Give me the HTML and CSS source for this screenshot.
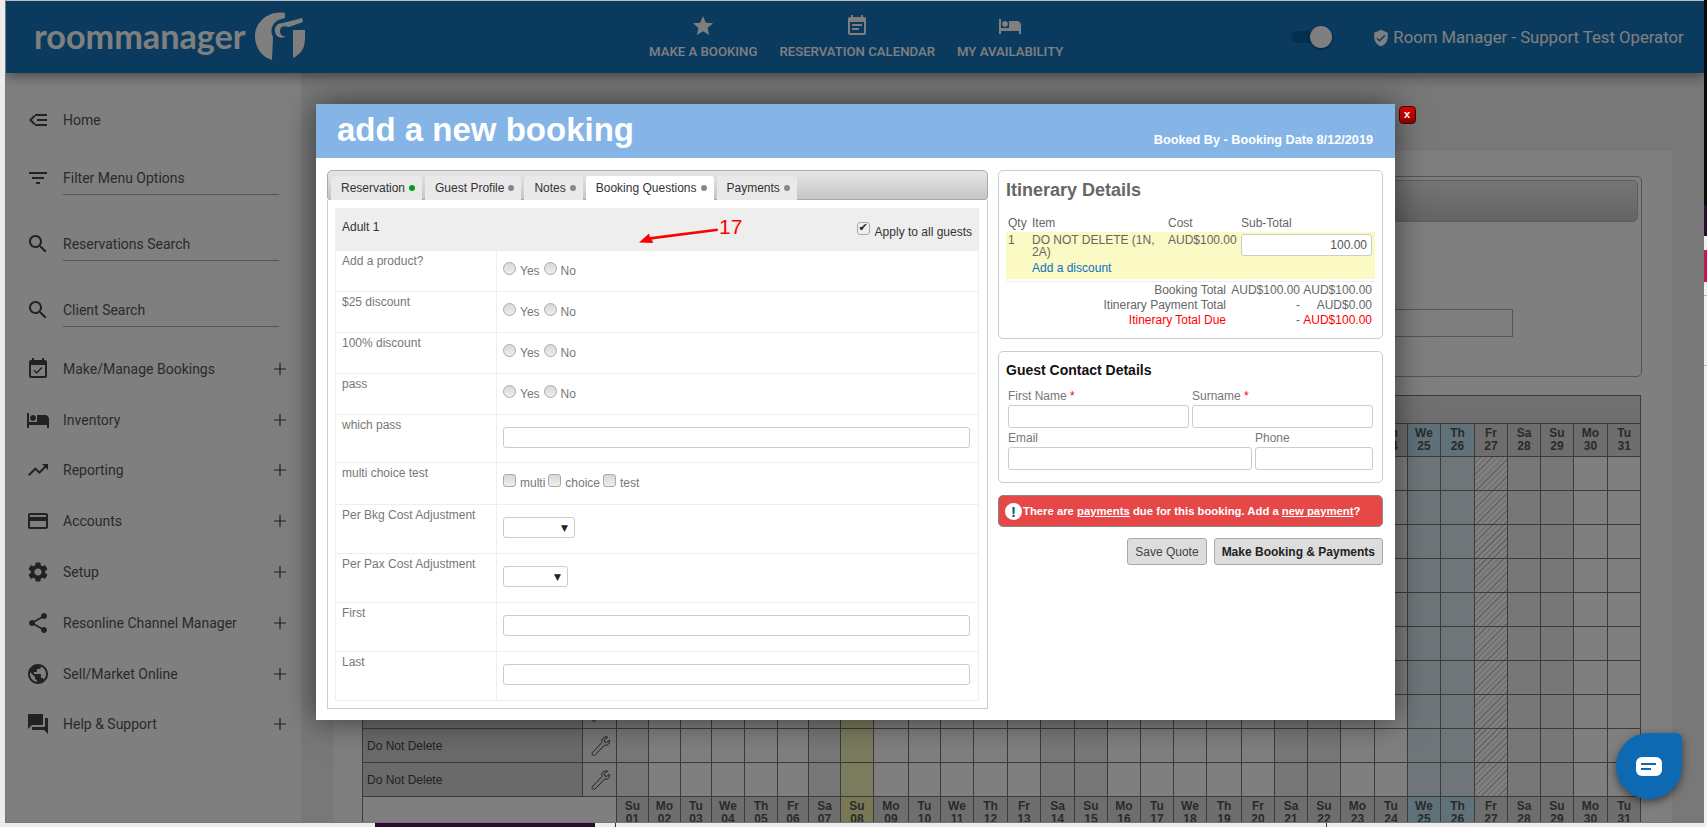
FILE: index.html
```html
<!DOCTYPE html>
<html lang="en">
<head>
<meta charset="utf-8">
<title>Room Manager - add a new booking</title>
<link rel="stylesheet" href="styles.css">
</head>
<body>
<svg class="defs" aria-hidden="true">
  <symbol id="wrench" viewBox="0 0 24 24"><path d="M20.500 2.500c-2-1-4.600-.4-5.800 1.400-.9 1.300-1 2.900-.5 4.200L4 18.800c-.9 1-.9 2.300 0 3s2 .6 2.900-.3L17.200 11c1.500.4 3.100.1 4.200-1.200 1-1.200 1.300-2.800.7-4.200l-2.700 2.500-2.400-.7-.5-2.300z" fill="#e8e8e8" stroke="#333" stroke-width="1"/></symbol>
</svg>

<div class="behind-strip">
  <div class="strip-black"></div>
  <div class="strip-purple"></div>
  <div class="strip-pink"></div>
  <div class="strip-line"></div>
  <div class="strip-line strip-line-b"></div>
</div>
<div class="behind-bar"></div>
<div class="behind-tick"></div>
<div class="behind-tick behind-tick-b"></div>

<div class="window">
  <header class="topbar">
    <div class="logo">
      <span class="logo-text">roommanager</span>
      <svg class="logo-mark" viewBox="0 0 50 48">
        <path d="M30 1C14-2 0 10 0 24c0 12 7 21 17 24l1-23c-4-7 0-17 9-18l3-1z" fill="#fff"/>
        <path d="M50 18v8c0 10-4 16-12 20V18z" fill="#fff"/>
        <path d="M28 11l19-5 1 4-14 5c-6-2-9 0-9 4s3 6 6 5c-3 3-10 2-11-4s3-9 8-9z" fill="#fff"/>
      </svg>
    </div>
    <nav class="topnav">
      <a class="topnav-item"><svg class="topnav-icon" viewBox="0 0 24 24"><path d="M12 17.270L18.180 21l-1.640-7.030L22 9.240l-7.190-.61L12 2 9.190 8.630 2 9.240l5.460 4.730L5.820 21z"/></svg>MAKE A BOOKING</a>
      <a class="topnav-item"><svg class="topnav-icon" viewBox="0 0 24 24"><path d="M17 10H7v2h10v-2zm2-7h-1V1h-2v2H8V1H6v2H5c-1.110 0-1.990.9-1.990 2L3 19c0 1.100.89 2 2 2h14c1.100 0 2-.9 2-2V5c0-1.100-.9-2-2-2zm0 16H5V8h14v11zm-5-5H7v2h7v-2z"/></svg>RESERVATION CALENDAR</a>
      <a class="topnav-item"><svg class="topnav-icon" viewBox="0 0 24 24"><path d="M7 13c1.660 0 3-1.340 3-3S8.660 7 7 7s-3 1.340-3 3 1.340 3 3 3zm12-6h-8v7H3V5H1v15h2v-3h18v3h2v-9c0-2.210-1.790-4-4-4z"/></svg>MY AVAILABILITY</a>
    </nav>
    <div class="toggle"><span class="toggle-track"></span><span class="toggle-knob"></span></div>
    <div class="operator">
      <svg class="operator-icon" viewBox="0 0 24 24"><path d="M12 1L3 5v6c0 5.550 3.840 10.740 9 12 5.160-1.260 9-6.450 9-12V5l-9-4zm-2 16l-4-4 1.410-1.410L10 14.170l6.590-6.590L18 9l-8 8z"/></svg>
      <span>Room Manager - Support Test Operator</span>
    </div>
  </header>

  <div class="workspace">
    <aside class="sidebar">
      <a class="side-home"><svg class="side-icon" viewBox="0 0 24 24"><path d="M9 18h12v-2H9v2zm2-5h10v-2H11v2zM9 6v2h12V6H9zM3 12l5 5 1.410-1.410L5.830 12l3.580-3.590L8 7l-5 5z"/></svg><span>Home</span></a>
      <a class="side-search"><svg class="side-icon" viewBox="0 0 24 24"><path d="M10 18h4v-2h-4v2zM3 6v2h18V6H3zm3 7h12v-2H6v2z"/></svg><span class="side-lined">Filter Menu Options</span></a>
      <a class="side-search"><svg class="side-icon" viewBox="0 0 24 24"><path d="M15.500 14h-.79l-.28-.27C15.410 12.590 16 11.110 16 9.500 16 5.910 13.090 3 9.500 3S3 5.910 3 9.500 5.910 16 9.500 16c1.610 0 3.090-.59 4.230-1.570l.27.28v.79l5 4.990L20.490 19l-4.990-5zm-6 0C7.010 14 5 11.990 5 9.500S7.010 5 9.500 5 14 7.010 14 9.500 11.990 14 9.500 14z"/></svg><span class="side-lined">Reservations Search</span></a>
      <a class="side-search"><svg class="side-icon" viewBox="0 0 24 24"><path d="M15.500 14h-.79l-.28-.27C15.410 12.590 16 11.110 16 9.500 16 5.910 13.090 3 9.500 3S3 5.910 3 9.500 5.910 16 9.500 16c1.610 0 3.090-.59 4.230-1.570l.27.28v.79l5 4.990L20.490 19l-4.990-5zm-6 0C7.010 14 5 11.990 5 9.500S7.010 5 9.500 5 14 7.010 14 9.500 11.990 14 9.500 14z"/></svg><span class="side-lined">Client Search</span></a>
      <ul class="side-list">
        <li class="side-row"><svg class="side-icon" viewBox="0 0 24 24"><path d="M16.530 11.060L15.470 10l-4.880 4.880-2.120-2.120-1.060 1.060L10.590 17l5.940-5.940zM19 3h-1V1h-2v2H8V1H6v2H5c-1.110 0-1.990.9-1.990 2L3 19c0 1.100.89 2 2 2h14c1.100 0 2-.9 2-2V5c0-1.100-.9-2-2-2zm0 16H5V8h14v11z"/></svg><span class="side-label">Make/Manage Bookings</span><svg class="side-plus" viewBox="0 0 12 12"><path d="M6 0v12M0 6h12"/></svg></li>
        <li class="side-row"><svg class="side-icon" viewBox="0 0 24 24"><path d="M7 13c1.660 0 3-1.340 3-3S8.660 7 7 7s-3 1.340-3 3 1.340 3 3 3zm12-6h-8v7H3V5H1v15h2v-3h18v3h2v-9c0-2.210-1.790-4-4-4z"/></svg><span class="side-label">Inventory</span><svg class="side-plus" viewBox="0 0 12 12"><path d="M6 0v12M0 6h12"/></svg></li>
        <li class="side-row"><svg class="side-icon" viewBox="0 0 24 24"><path d="M16 6l2.290 2.290-4.880 4.880-4-4L2 16.590 3.410 18l6-6 4 4 6.300-6.290L22 12V6z"/></svg><span class="side-label">Reporting</span><svg class="side-plus" viewBox="0 0 12 12"><path d="M6 0v12M0 6h12"/></svg></li>
        <li class="side-row"><svg class="side-icon" viewBox="0 0 24 24"><path d="M20 4H4c-1.110 0-1.990.89-1.990 2L2 18c0 1.110.89 2 2 2h16c1.110 0 2-.89 2-2V6c0-1.110-.89-2-2-2zm0 14H4v-6h16v6zm0-10H4V6h16v2z"/></svg><span class="side-label">Accounts</span><svg class="side-plus" viewBox="0 0 12 12"><path d="M6 0v12M0 6h12"/></svg></li>
        <li class="side-row"><svg class="side-icon" viewBox="0 0 24 24"><path d="M19.140 12.940c.04-.3.06-.61.06-.94 0-.32-.02-.64-.07-.94l2.030-1.580c.18-.14.23-.41.12-.61l-1.920-3.320c-.12-.22-.37-.29-.59-.22l-2.390.96c-.5-.38-1.030-.7-1.620-.94l-.36-2.540c-.04-.24-.24-.41-.48-.41h-3.840c-.24 0-.43.17-.47.41l-.36 2.540c-.59.24-1.130.57-1.620.94l-2.390-.96c-.22-.08-.47 0-.59.22L2.740 8.870c-.12.21-.08.47.12.61l2.030 1.580c-.05.3-.09.63-.09.94s.02.64.07.94l-2.030 1.580c-.18.14-.23.41-.12.61l1.920 3.320c.12.22.37.29.59.22l2.390-.96c.5.38 1.030.7 1.620.94l.36 2.540c.05.24.24.41.48.41h3.840c.24 0 .44-.17.47-.41l.36-2.540c.59-.24 1.130-.56 1.620-.94l2.390.96c.22.08.47 0 .59-.22l1.920-3.320c.12-.22.07-.47-.12-.61l-2.010-1.580zM12 15.600c-1.980 0-3.600-1.620-3.600-3.600s1.620-3.600 3.600-3.600 3.600 1.620 3.600 3.600-1.620 3.600-3.600 3.600z"/></svg><span class="side-label">Setup</span><svg class="side-plus" viewBox="0 0 12 12"><path d="M6 0v12M0 6h12"/></svg></li>
        <li class="side-row"><svg class="side-icon" viewBox="0 0 24 24"><path d="M18 16.080c-.76 0-1.440.3-1.960.77L8.910 12.700c.05-.23.09-.46.09-.7s-.04-.47-.09-.7l7.050-4.110c.54.5 1.250.81 2.040.81 1.660 0 3-1.340 3-3s-1.340-3-3-3-3 1.340-3 3c0 .24.04.47.09.7L8.040 9.810C7.500 9.310 6.790 9 6 9c-1.660 0-3 1.340-3 3s1.340 3 3 3c.79 0 1.500-.31 2.040-.81l7.120 4.160c-.05.21-.08.43-.08.65 0 1.610 1.310 2.920 2.920 2.920 1.610 0 2.920-1.310 2.920-2.920s-1.310-2.920-2.920-2.920z"/></svg><span class="side-label">Resonline Channel Manager</span><svg class="side-plus" viewBox="0 0 12 12"><path d="M6 0v12M0 6h12"/></svg></li>
        <li class="side-row"><svg class="side-icon" viewBox="0 0 24 24"><path d="M12 2C6.480 2 2 6.480 2 12s4.480 10 10 10 10-4.480 10-10S17.520 2 12 2zm-1 17.930c-3.950-.49-7-3.850-7-7.930 0-.62.08-1.210.21-1.790L9 15v1c0 1.100.9 2 2 2v1.930zm6.900-2.540c-.26-.81-1-1.390-1.900-1.390h-1v-3c0-.55-.45-1-1-1H8v-2h2c.55 0 1-.45 1-1V7h2c1.100 0 2-.9 2-2v-.41c2.930 1.190 5 4.060 5 7.410 0 2.080-.8 3.970-2.100 5.390z"/></svg><span class="side-label">Sell/Market Online</span><svg class="side-plus" viewBox="0 0 12 12"><path d="M6 0v12M0 6h12"/></svg></li>
        <li class="side-row"><svg class="side-icon" viewBox="0 0 24 24"><path d="M21 6h-2v9H6v2c0 .55.45 1 1 1h11l4 4V7c0-.55-.45-1-1-1zm-4 6V3c0-.55-.45-1-1-1H3c-.55 0-1 .45-1 1v14l4-4h10c.55 0 1-.45 1-1z"/></svg><span class="side-label">Help &amp; Support</span><svg class="side-plus" viewBox="0 0 12 12"><path d="M6 0v12M0 6h12"/></svg></li>
      </ul>
    </aside>

    <main class="main">
      <section class="panel">
        <div class="search-box">
          <div class="search-bar"></div>
          <div class="search-field"><div class="search-input"></div></div>
        </div>
        <table class="cal">
          <colgroup>
            <col class="c-name"><col class="c-tool">
            <col class="w32 wk"><col class="w32"><col class="w31"><col class="w33"><col class="w33"><col class="w31"><col class="w32 wk">
            <col class="w33 today"><col class="w35"><col class="w32"><col class="w33"><col class="w34"><col class="w33"><col class="w34 wk">
            <col class="w33 wk"><col class="w33"><col class="w33"><col class="w33"><col class="w35"><col class="w33"><col class="w33 wk">
            <col class="w33 wk"><col class="w34"><col class="w33"><col class="w33 hl"><col class="w34 hl"><col class="w33 hatch"><col class="w33 wk">
            <col class="w33 wk"><col class="w34"><col class="w33">
          </colgroup>
          <tr class="cal-title"><td colspan="33"></td></tr>
          <tr class="cal-days">
            <th colspan="2" class="blank"></th>
            <th>Su<br>01</th><th>Mo<br>02</th><th>Tu<br>03</th><th>We<br>04</th><th>Th<br>05</th><th>Fr<br>06</th><th>Sa<br>07</th><th class="today">Su<br>08</th><th>Mo<br>09</th><th>Tu<br>10</th><th>We<br>11</th><th>Th<br>12</th><th>Fr<br>13</th><th>Sa<br>14</th><th>Su<br>15</th><th>Mo<br>16</th><th>Tu<br>17</th><th>We<br>18</th><th>Th<br>19</th><th>Fr<br>20</th><th>Sa<br>21</th><th>Su<br>22</th><th>Mo<br>23</th><th>Tu<br>24</th><th class="hl">We<br>25</th><th class="hl">Th<br>26</th><th>Fr<br>27</th><th>Sa<br>28</th><th>Su<br>29</th><th>Mo<br>30</th><th>Tu<br>31</th>
          </tr>
          <tr class="cal-row"><td class="r-name">Do Not Delete</td><td class="r-tool"><svg class="wrench"><use href="#wrench"/></svg></td><td></td><td></td><td></td><td></td><td></td><td></td><td></td><td></td><td></td><td></td><td></td><td></td><td></td><td></td><td></td><td></td><td></td><td></td><td></td><td></td><td></td><td></td><td></td><td></td><td></td><td></td><td></td><td></td><td></td><td></td><td></td></tr>
          <tr class="cal-row"><td class="r-name">Do Not Delete</td><td class="r-tool"><svg class="wrench"><use href="#wrench"/></svg></td><td></td><td></td><td></td><td></td><td></td><td></td><td></td><td></td><td></td><td></td><td></td><td></td><td></td><td></td><td></td><td></td><td></td><td></td><td></td><td></td><td></td><td></td><td></td><td></td><td></td><td></td><td></td><td></td><td></td><td></td><td></td></tr>
          <tr class="cal-row"><td class="r-name">Do Not Delete</td><td class="r-tool"><svg class="wrench"><use href="#wrench"/></svg></td><td></td><td></td><td></td><td></td><td></td><td></td><td></td><td></td><td></td><td></td><td></td><td></td><td></td><td></td><td></td><td></td><td></td><td></td><td></td><td></td><td></td><td></td><td></td><td></td><td></td><td></td><td></td><td></td><td></td><td></td><td></td></tr>
          <tr class="cal-row"><td class="r-name">Do Not Delete</td><td class="r-tool"><svg class="wrench"><use href="#wrench"/></svg></td><td></td><td></td><td></td><td></td><td></td><td></td><td></td><td></td><td></td><td></td><td></td><td></td><td></td><td></td><td></td><td></td><td></td><td></td><td></td><td></td><td></td><td></td><td></td><td></td><td></td><td></td><td></td><td></td><td></td><td></td><td></td></tr>
          <tr class="cal-row"><td class="r-name">Do Not Delete</td><td class="r-tool"><svg class="wrench"><use href="#wrench"/></svg></td><td></td><td></td><td></td><td></td><td></td><td></td><td></td><td></td><td></td><td></td><td></td><td></td><td></td><td></td><td></td><td></td><td></td><td></td><td></td><td></td><td></td><td></td><td></td><td></td><td></td><td></td><td></td><td></td><td></td><td></td><td></td></tr>
          <tr class="cal-row"><td class="r-name">Do Not Delete</td><td class="r-tool"><svg class="wrench"><use href="#wrench"/></svg></td><td></td><td></td><td></td><td></td><td></td><td></td><td></td><td></td><td></td><td></td><td></td><td></td><td></td><td></td><td></td><td></td><td></td><td></td><td></td><td></td><td></td><td></td><td></td><td></td><td></td><td></td><td></td><td></td><td></td><td></td><td></td></tr>
          <tr class="cal-row"><td class="r-name">Do Not Delete</td><td class="r-tool"><svg class="wrench"><use href="#wrench"/></svg></td><td></td><td></td><td></td><td></td><td></td><td></td><td></td><td></td><td></td><td></td><td></td><td></td><td></td><td></td><td></td><td></td><td></td><td></td><td></td><td></td><td></td><td></td><td></td><td></td><td></td><td></td><td></td><td></td><td></td><td></td><td></td></tr>
          <tr class="cal-row"><td class="r-name">Do Not Delete</td><td class="r-tool"><svg class="wrench"><use href="#wrench"/></svg></td><td></td><td></td><td></td><td></td><td></td><td></td><td></td><td></td><td></td><td></td><td></td><td></td><td></td><td></td><td></td><td></td><td></td><td></td><td></td><td></td><td></td><td></td><td></td><td></td><td></td><td></td><td></td><td></td><td></td><td></td><td></td></tr>
          <tr class="cal-row"><td class="r-name">Do Not Delete</td><td class="r-tool"><svg class="wrench"><use href="#wrench"/></svg></td><td></td><td></td><td></td><td></td><td></td><td></td><td></td><td></td><td></td><td></td><td></td><td></td><td></td><td></td><td></td><td></td><td></td><td></td><td></td><td></td><td></td><td></td><td></td><td></td><td></td><td></td><td></td><td></td><td></td><td></td><td></td></tr>
          <tr class="cal-row"><td class="r-name">Do Not Delete</td><td class="r-tool"><svg class="wrench"><use href="#wrench"/></svg></td><td></td><td></td><td></td><td></td><td></td><td></td><td></td><td></td><td></td><td></td><td></td><td></td><td></td><td></td><td></td><td></td><td></td><td></td><td></td><td></td><td></td><td></td><td></td><td></td><td></td><td></td><td></td><td></td><td></td><td></td><td></td></tr>
          <tr class="cal-days cal-foot">
            <th colspan="2" class="blank"></th>
            <th>Su<br>01</th><th>Mo<br>02</th><th>Tu<br>03</th><th>We<br>04</th><th>Th<br>05</th><th>Fr<br>06</th><th>Sa<br>07</th><th class="today">Su<br>08</th><th>Mo<br>09</th><th>Tu<br>10</th><th>We<br>11</th><th>Th<br>12</th><th>Fr<br>13</th><th>Sa<br>14</th><th>Su<br>15</th><th>Mo<br>16</th><th>Tu<br>17</th><th>We<br>18</th><th>Th<br>19</th><th>Fr<br>20</th><th>Sa<br>21</th><th>Su<br>22</th><th>Mo<br>23</th><th>Tu<br>24</th><th class="hl">We<br>25</th><th class="hl">Th<br>26</th><th>Fr<br>27</th><th>Sa<br>28</th><th>Su<br>29</th><th>Mo<br>30</th><th>Tu<br>31</th>
          </tr>
        </table>
      </section>
    </main>
  </div>
  <div class="scrim"></div>
</div>

<section class="modal">
  <a class="modal-close">x</a>
  <header class="modal-head">
    <h1 class="modal-title">add a new booking</h1>
    <span class="modal-meta">Booked By - Booking Date 8/12/2019</span>
  </header>
  <div class="modal-body">
    <div class="form-col">
      <div class="tabs">
        <a class="tab">Reservation<i class="dot dot-on"></i></a>
        <a class="tab">Guest Profile<i class="dot"></i></a>
        <a class="tab">Notes<i class="dot"></i></a>
        <a class="tab tab-active">Booking Questions<i class="dot"></i></a>
        <a class="tab">Payments<i class="dot"></i></a>
      </div>
      <div class="tab-panel">
        <table class="qs">
          <colgroup><col class="qs-c1"><col class="qs-c2"></colgroup>
          <tr class="qs-head">
            <td colspan="2"><div class="qs-head-row"><span>Adult 1</span><label class="apply"><input type="checkbox" class="box" checked>Apply to all guests</label></div></td>
          </tr>
          <tr class="q q41"><td class="q-label">Add a product?</td><td class="q-ctl"><div class="opts"><label class="opt"><input type="radio" class="rad">Yes</label><label class="opt"><input type="radio" class="rad">No</label></div></td></tr>
          <tr class="q q41"><td class="q-label">$25 discount</td><td class="q-ctl"><div class="opts"><label class="opt"><input type="radio" class="rad">Yes</label><label class="opt"><input type="radio" class="rad">No</label></div></td></tr>
          <tr class="q q41"><td class="q-label">100% discount</td><td class="q-ctl"><div class="opts"><label class="opt"><input type="radio" class="rad">Yes</label><label class="opt"><input type="radio" class="rad">No</label></div></td></tr>
          <tr class="q q41"><td class="q-label">pass</td><td class="q-ctl"><div class="opts"><label class="opt"><input type="radio" class="rad">Yes</label><label class="opt"><input type="radio" class="rad">No</label></div></td></tr>
          <tr class="q q48"><td class="q-label">which pass</td><td class="q-field"><input type="text" class="txt"></td></tr>
          <tr class="q q42"><td class="q-label">multi choice test</td><td class="q-ctl"><div class="opts opts-multi"><label class="opt"><input type="checkbox" class="box">multi</label><label class="opt"><input type="checkbox" class="box">choice</label><label class="opt"><input type="checkbox" class="box">test</label></div></td></tr>
          <tr class="q q49"><td class="q-label">Per Bkg Cost Adjustment</td><td class="q-field"><div class="sel sel-a"><span class="sel-arrow">▼</span></div></td></tr>
          <tr class="q q49"><td class="q-label">Per Pax Cost Adjustment</td><td class="q-field"><div class="sel sel-b"><span class="sel-arrow">▼</span></div></td></tr>
          <tr class="q q49"><td class="q-label">First</td><td class="q-field"><input type="text" class="txt"></td></tr>
          <tr class="q q49"><td class="q-label">Last</td><td class="q-field"><input type="text" class="txt"></td></tr>
        </table>
      </div>
    </div>

    <div class="side-col">
      <div class="card card-itin">
        <h2 class="itin-title">Itinerary Details</h2>
        <div class="itin-grid itin-head"><span>Qty</span><span>Item</span><span>Cost</span><span>Sub-Total</span></div>
        <div class="itin-grid itin-row">
          <span>1</span>
          <span class="itin-item">DO NOT DELETE (1N, 2A)<a class="itin-link">Add a discount</a></span>
          <span>AUD$100.00</span>
          <input type="text" class="txt txt-money" value="100.00">
        </div>
        <div class="totals">
          <span>Booking Total</span><span class="t-r">AUD$100.00</span><span class="t-r">AUD$100.00</span>
          <span>Itinerary Payment Total</span><span class="t-r">-</span><span class="t-r">AUD$0.00</span>
          <span class="due">Itinerary Total Due</span><span class="t-r">-</span><span class="t-r due">AUD$100.00</span>
        </div>
      </div>

      <div class="card card-guest">
        <h3 class="guest-title">Guest Contact Details</h3>
        <div class="guest-row guest-row-a">
          <label class="g-field">First Name <b class="req">*</b><input type="text" class="txt txt-g"></label>
          <label class="g-field">Surname <b class="req">*</b><input type="text" class="txt txt-g"></label>
        </div>
        <div class="guest-row guest-row-b">
          <label class="g-field">Email<input type="text" class="txt txt-g"></label>
          <label class="g-field">Phone<input type="text" class="txt txt-g"></label>
        </div>
      </div>

      <div class="alert">
        <span class="alert-icon">!</span>
        <span class="alert-text">There are <u>payments</u> due for this booking. Add a <u>new payment</u>?</span>
      </div>

      <div class="actions">
        <button class="btn">Save Quote</button>
        <button class="btn btn-main">Make Booking &amp; Payments</button>
      </div>
    </div>
  </div>

  <div class="note">
    <span class="note-num">17</span>
    <svg class="note-arrow" viewBox="0 0 80 14"><path d="M79 1L13 9.500l1 3.500L0 12.500 10 3.500l1 3.500L78.500 -1.500z" fill="#f00"/></svg>
  </div>
</section>

<a class="chat"><span class="chat-bubble"><i class="chat-line"></i><i class="chat-line chat-line-s"></i></span></a>
</body>
</html>
```

FILE: styles.css
```css
* { box-sizing: border-box; }
html, body { margin: 0; height: 827px; overflow: hidden; }
body {
  position: relative;
  width: 1707px;
  background: #ececec;
  font-family: "Liberation Sans", Arial, sans-serif;
  font-size: 12px;
  color: #777;
}
a { cursor: pointer; }
.defs { position: absolute; width: 0; height: 0; }

/* Things behind the browser window */
.behind-strip { position: absolute; left: 1704px; top: 0; width: 3px; height: 827px; background: #f2f2f2; }
.strip-black { height: 205px; background: #0a0a0a; }
.strip-purple { height: 31px; background: #2a0a30; }
.strip-pink { height: 32px; margin-top: 14px; background: #c8184f; }
.strip-line { height: 1px; margin-top: 13px; background: #bbb; }
.strip-line-b { margin-top: 69px; }
.behind-bar { position: absolute; left: 375px; top: 823px; width: 220px; height: 4px; background: #2d0a32; }
.behind-tick { position: absolute; left: 615px; top: 823px; width: 1px; height: 4px; background: #333; }
.behind-tick-b { left: 1326px; }

/* Window */
.window {
  position: relative;
  z-index: 0;
  width: 1699px;
  height: 823px;
  margin-left: 5px;
  border-top: 1px solid #bdbdbd;
  border-left: 1px solid #777;
  border-bottom: 1px solid #777;
  display: flex;
  flex-direction: column;
  overflow: hidden;
}
.scrim { position: absolute; inset: 0; z-index: 2; background: rgba(0,0,0,.5); }

/* Top bar */
.topbar {
  position: relative;
  z-index: 1;
  flex: 0 0 72px;
  display: flex;
  align-items: flex-start;
  background: #1476be;
  color: #fff;
  box-shadow: 0 3px 12px rgba(0,0,0,.45);
}
.logo { display: flex; align-items: flex-start; width: 610px; padding: 11px 0 0 28px; }
.logo-text { margin-top: 2px; font-family: Lato, sans-serif; font-weight: 700; font-size: 34.2px; line-height: 44px; width: 221px; }
.logo-mark { width: 50px; height: 48px; }
.topnav { display: flex; gap: 22px; padding-top: 13px; margin-left: 33px; }
.topnav-item { display: flex; flex-direction: column; align-items: center; font-family: Roboto, sans-serif; font-weight: 500; font-size: 13.2px; line-height: 14px; }
.topnav-icon { width: 24px; height: 24px; fill: #fff; margin-bottom: 7px; }
.toggle { position: relative; width: 40px; height: 22px; margin: 25px 0 0 228px; }
.toggle-track { position: absolute; left: 0; top: 5px; width: 30px; height: 12px; border-radius: 6px; background: #0a5e9e; }
.toggle-knob { position: absolute; left: 19px; top: 0; width: 22px; height: 22px; border-radius: 50%; background: #fff; box-shadow: 0 1px 3px rgba(0,0,0,.5); }
.operator { display: flex; align-items: center; gap: 3px; margin: 26px 0 0 41px; font-family: Roboto, sans-serif; font-size: 16.7px; line-height: 22px; white-space: nowrap; }
.operator-icon { width: 18px; height: 18px; fill: #fff; }

/* Workspace */
.workspace { flex: 1; display: flex; min-height: 0; }
.sidebar { flex: 0 0 295px; padding: 38px 0 0 20px; background: #fff; font-family: Roboto, sans-serif; font-size: 14px; color: #555; }
.side-icon { flex: 0 0 24px; width: 24px; height: 24px; fill: #444; }
.side-home { display: flex; align-items: center; gap: 13px; height: 18px; line-height: 18px; }
.side-search { display: flex; align-items: center; gap: 13px; height: 66px; padding-top: 39px; }
.side-search .side-icon { margin-top: -7px; }
.side-lined { flex: 0 0 216px; height: 27px; line-height: 20px; border-bottom: 1px solid #aaa; }
.side-list { list-style: none; margin: 16.500px 0 0; padding: 0; }
.side-row { display: flex; align-items: center; gap: 13px; height: 50.8px; }
.side-label { flex: 0 0 198px; }
.side-plus { width: 12px; height: 12px; fill: none; stroke: #444; stroke-width: 1.2; }

.main { flex: 1; min-width: 0; padding: 78px 32px 0 33px; background: #f0f0f0; }
.panel { height: 700px; padding: 25px 29px 0 28px; background: #fff; }
.search-box { position: relative; height: 201px; width: 1280px; padding: 3px; border: 1px solid #aaa; border-radius: 5px; }
.search-bar { height: 42px; border: 1px solid #bbb; border-radius: 5px; background: linear-gradient(#ececec, #c8c8c8); }
.search-field { display: flex; justify-content: flex-end; padding: 87px 125px 0 0; }
.search-input { width: 700px; height: 28px; border: 1px solid #aaa; }
.cal { width: 1278px; margin-top: 18px; border-collapse: collapse; table-layout: fixed; }
.cal td, .cal th { border: 1px solid #777; padding: 0; }
.c-name { width: 220px; }
.c-tool { width: 34px; }
.w31 { width: 31px; } .w32 { width: 32px; } .w33 { width: 33px; } .w34 { width: 34px; } .w35 { width: 35px; }
col.wk { background: #eee; }
col.today { background: #f6f6bc; }
col.hl { background: #dcecf5; }
col.hatch { background: repeating-linear-gradient(135deg, #fff 0 3px, #c9c9c9 3px 4px); }
.cal-title td { height: 28px; background: linear-gradient(#e4e4e4, #dcdcdc); }
.cal-days th { height: 33px; background: #ddd; font: bold 12px/13px "Liberation Sans", Arial, sans-serif; color: #555; text-align: center; }
.cal-days th.today { background: #f0f0a8; }
.cal-days th.hl { background: #bee4f5; }
.cal-foot th.blank { background: #fff; }
.cal-row td { height: 34px; }
.cal .r-name { padding-left: 4px; background: #d4d4d4; color: #444; font-size: 12px; }
.r-tool { text-align: center; background: #eee; }
.wrench { display: block; width: 22px; height: 22px; margin: 0 auto; }

/* Modal */
.modal {
  position: absolute;
  z-index: 1;
  left: 316px;
  top: 104px;
  width: 1078.500px;
  height: 616px;
  background: #fff;
  box-shadow: 0 0 30px rgba(0,0,0,.55);
}
.modal-close {
  position: absolute;
  right: -21px;
  top: 2px;
  width: 17px;
  height: 18px;
  border-radius: 4px;
  background: linear-gradient(#e20000, #8a0000);
  border: 1px solid #400;
  color: #fff;
  font: bold 11px/14px "Liberation Sans", Arial, sans-serif;
  text-align: center;
}
.modal-head { display: flex; justify-content: space-between; height: 54px; padding: 0 21.500px 0 21px; background: #85b5e6; color: #fff; }
.modal-title { margin: 5px 0 0; font-size: 33px; line-height: 42px; font-weight: 700; }
.modal-meta { margin-top: 28px; font-size: 12.7px; line-height: 16px; font-weight: 700; }
.modal-body { display: flex; gap: 10px; padding: 12px 12px 0 11px; }

.form-col { flex: 0 0 660px; }
.tabs { display: flex; gap: 3px; height: 30px; padding: 5px 0 0 3px; border: 1px solid #aaa; border-radius: 5px 5px 3px 3px; background: linear-gradient(#e6e6e6, #c6c6c6); }
.tab { display: flex; align-items: center; height: 24px; padding: 0 7px 0 10px; border-radius: 3px 3px 0 0; background: #e9e9e9; color: #333; white-space: nowrap; }
.tab-active { background: #fff; }
.dot { width: 6px; height: 6px; margin-left: 4px; border-radius: 50%; background: #888; }
.dot-on { background: #0a9a1e; }
.tab-panel { height: 509px; padding: 8px 8px 0 7px; border: 1px solid #ccc; border-top: 0; }
.qs { width: 643px; border-collapse: collapse; table-layout: fixed; }
.qs-c1 { width: 161px; }
.qs-c2 { width: 482px; }
.qs td { border: 1px solid #eee; vertical-align: top; padding: 0; }
.qs-head td { height: 42px; background: #eee; color: #333; padding: 11px 6px 0 6px; }
.qs-head-row { display: flex; justify-content: space-between; line-height: 14px; }
.apply { display: flex; gap: 5px; margin-top: 5px; }
.apply .box { margin-top: -3px; }
.q41 td { height: 41px; } .q42 td { height: 42px; } .q48 td { height: 48px; } .q49 td { height: 49px; }
.qs .q-label { padding: 3px 6px 0 6px; line-height: 14px; }
.qs .q-ctl { padding: 11px 0 0 6px; }
.qs .q-field { padding: 12px 8px 0 6px; }
.opts { display: flex; gap: 4px; }
.opts-multi { gap: 3px; }
.opt { display: flex; align-items: flex-start; gap: 4px; padding-top: 2px; line-height: 14px; }
.rad, .box {
  appearance: none;
  -webkit-appearance: none;
  flex: none;
  width: 13px;
  height: 13px;
  margin: -2px 0 0;
  border: 1px solid #aaa;
  background: linear-gradient(#d8d8d8, #eee);
}
.rad { border-radius: 50%; }
.box { position: relative; border-radius: 3px; }
.box:checked { background: #eee; }
.box:checked::after { content: "✔"; position: absolute; left: 1px; top: -2px; font: 11px/14px "DejaVu Sans", sans-serif; color: #222; }
.txt { display: block; width: 100%; height: 21px; margin: 0; padding: 0 4px; border: 1px solid #ccc; border-radius: 3px; background: #fff; font: 12px "Liberation Sans", Arial, sans-serif; color: #555; outline: 0; }
.sel { position: relative; height: 21px; border: 1px solid #ccc; border-radius: 3px; }
.sel-a { width: 72px; }
.sel-b { width: 65px; }
.sel-arrow { position: absolute; right: 6px; top: 3px; font: 9px/14px "DejaVu Sans", sans-serif; color: #222; }

.side-col { flex: 0 0 385px; display: flex; flex-direction: column; }
.card { border: 1px solid #ccc; border-radius: 5px; padding: 0 7px; }
.card-itin { height: 169px; color: #666; }
.itin-title { margin: 9px 0 0; font-size: 18px; line-height: 21px; color: #666; font-weight: 700; }
.itin-grid { display: grid; grid-template-columns: 24px 136px 73px 131px; padding-left: 2px; line-height: 12px; }
.itin-head { margin-top: 16px; height: 12px; }
.itin-row { height: 47px; margin-top: 3px; padding-top: 2px; width: 369px; background: #fbfac5; }
.itin-link { display: block; margin-top: 2px; line-height: 16px; color: #0d6fc4; }
.txt-money { height: 22px; margin-top: 0; text-align: right; }
.totals { display: grid; grid-template-columns: 220px 74px 72px; margin-top: 2px; padding-top: 1px; border-top: 1px solid #eee; line-height: 15px; text-align: right; width: 369px; }
.t-r { text-align: right; }
.due { color: #f00; }
.card-guest { height: 132px; margin-top: 12px; }
.guest-title { margin: 10px 0 0; font-size: 14px; line-height: 16px; color: #111; font-weight: 700; }
.guest-row { display: grid; column-gap: 3px; padding-left: 2px; width: 367px; }
.guest-row-a { grid-template-columns: 181px 181px; margin-top: 11px; }
.guest-row-b { grid-template-columns: 244px 118px; margin-top: 3px; }
.g-field { display: block; line-height: 14px; }
.req { font-weight: 400; color: #f00; }
.txt-g { height: 23px; margin-top: 2px; }
.alert { display: flex; align-items: center; gap: 1px; height: 32px; margin-top: 12px; padding-left: 6px; border: 1px solid #888; border-radius: 5px; background: #e64848; color: #fff; font-weight: 700; }
.alert-text { font-size: 11.3px; white-space: nowrap; }
.alert-icon { width: 17px; height: 17px; border-radius: 50%; background: #fff; color: #17505e; font: bold 15px/17px "Liberation Sans", Arial, sans-serif; text-align: center; }
.actions { display: flex; justify-content: flex-end; gap: 7px; margin-top: 11px; }
.btn { height: 27px; padding: 0 7px; border: 1px solid #aaa; border-radius: 3px; background: #ddd; font: 12px "Liberation Sans", Arial, sans-serif; color: #444; }
.btn-main { font-weight: 700; color: #222; }

/* Hand-drawn annotation */
.note { position: absolute; left: 323px; top: 114px; width: 104px; height: 30px; }
.note-num { position: absolute; left: 80px; top: -2px; font-size: 21px; line-height: 22px; color: #f00; }
.note-arrow { position: absolute; left: 0; top: 12px; width: 80px; height: 14px; overflow: visible; }

/* Chat */
.chat { position: absolute; z-index: 1; left: 1616px; top: 733px; width: 66px; height: 66px; display: flex; align-items: center; justify-content: center; border-radius: 50% 6px 50% 50%; background: #0e69b3; box-shadow: 0 3px 8px rgba(0,0,0,.5); }
.chat-bubble { display: flex; flex-direction: column; gap: 3px; width: 26px; height: 19px; padding: 6px 5px 0 5px; border-radius: 6px; background: #fff; }
.chat-line { display: block; width: 15px; height: 2px; background: #0e69b3; }
.chat-line-s { width: 10px; }
```
